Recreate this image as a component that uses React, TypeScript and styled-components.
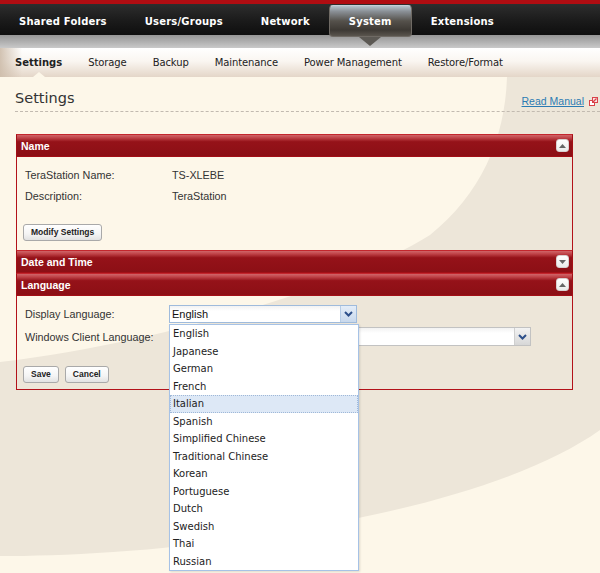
import React from 'react'
import styled, { createGlobalStyle } from 'styled-components'

const GlobalStyle = createGlobalStyle`
  html, body {
    margin: 0;
    padding: 0;
    background: #fdf7e9;
  }
  * { box-sizing: border-box; }
`

const mainTabs = ['Shared Folders', 'Users/Groups', 'Network', 'System', 'Extensions']
const subTabs = ['Settings', 'Storage', 'Backup', 'Maintenance', 'Power Management', 'Restore/Format']
const languages = [
  'English', 'Japanese', 'German', 'French', 'Italian', 'Spanish', 'Simplified Chinese',
  'Traditional Chinese', 'Korean', 'Portuguese', 'Dutch', 'Swedish', 'Thai', 'Russian',
]

const Backdrop = () => (
  <BackdropSvg width="600" height="573" viewBox="0 0 600 573">
    <path
      d="M507 77 L600 77 L600 430 C530 480 400 515 260 535 C160 552 60 556 0 556 L0 362 C180 340 360 280 430 235 C480 195 505 140 507 77 Z"
      fill="#ede6d9"
    />
  </BackdropSvg>
)

const ToggleIcon = ({ up }: { up: boolean }) => (
  <svg width="7" height="4" viewBox="0 0 7 4">
    {up ? <path d="M0 4 L3.5 0 L7 4 Z" fill="#666" /> : <path d="M0 0 L7 0 L3.5 4 Z" fill="#666" />}
  </svg>
)

const Chevron = ({ color }: { color: string }) => (
  <svg width="9" height="6" viewBox="0 0 9 6">
    <path d="M1 1 L4.5 4.5 L8 1" fill="none" stroke={color} strokeWidth="2" />
  </svg>
)

const ExternalIcon = () => (
  <svg width="9" height="9" viewBox="0 0 9 9">
    <rect x="0.5" y="3.5" width="5" height="5" fill="#fff" stroke="#d9434a" />
    <rect x="3.5" y="0.5" width="5" height="5" fill="#fbe3e3" stroke="#d9434a" />
    <path d="M4 5 L7.5 1.5" stroke="#d9434a" strokeWidth="1.2" />
  </svg>
)

type SectionProps = { title: string; open: boolean; children?: React.ReactNode }

const Section = ({ title, open, children }: SectionProps) => (
  <>
    <SectionHeader>
      <span>{title}</span>
      <ToggleButton>
        <ToggleIcon up={open} />
      </ToggleButton>
    </SectionHeader>
    {open && children}
  </>
)

const App = () => {
  return (
    <Page>
      <GlobalStyle />
      <Backdrop />
      <TopBar>
        {mainTabs.map((t) => (
          <MainTab key={t} active={t === 'System'}>{t}</MainTab>
        ))}
      </TopBar>
      <GreyBand />
      <SubNav>
        {subTabs.map((t) => (
          <SubTab key={t} active={t === 'Settings'}>{t}</SubTab>
        ))}
      </SubNav>

      <PageHeader>
        <Title>Settings</Title>
        <ManualLink>
          <span>Read Manual</span>
          <ExternalIcon />
        </ManualLink>
      </PageHeader>

      <Panel>
        <Section title="Name" open>
          <SectionBody bottom={9}>
            <InfoRow>
              <Label>TeraStation Name:</Label>
              <Value>TS-XLEBE</Value>
            </InfoRow>
            <InfoRow>
              <Label>Description:</Label>
              <Value>TeraStation</Value>
            </InfoRow>
            <ButtonRow>
              <SmallButton>Modify Settings</SmallButton>
            </ButtonRow>
          </SectionBody>
        </Section>
        <Section title="Date and Time" open={false} />
        <Section title="Language" open>
          <SectionBody bottom={6}>
            <FieldRow>
              <FieldLabel>Display Language:</FieldLabel>
              <SelectWrap>
                <SelectBox width={188} focused>
                  <SelectText>English</SelectText>
                  <SelectArrow focused>
                    <Chevron color="#2d4f8a" />
                  </SelectArrow>
                </SelectBox>
                <OptionList>
                  {languages.map((l) => (
                    <OptionItem key={l} hovered={l === 'Italian'}>{l}</OptionItem>
                  ))}
                </OptionList>
              </SelectWrap>
            </FieldRow>
            <FieldRow>
              <FieldLabel>Windows Client Language:</FieldLabel>
              <SelectBox width={362}>
                <SelectText />
                <SelectArrow>
                  <Chevron color="#2d4f8a" />
                </SelectArrow>
              </SelectBox>
            </FieldRow>
            <ButtonRow>
              <SmallButton>Save</SmallButton>
              <SmallButton>Cancel</SmallButton>
            </ButtonRow>
          </SectionBody>
        </Section>
      </Panel>
    </Page>
  )
}

export default App

const Page = styled.div`
  position: relative;
  width: 600px;
  min-height: 573px;
  overflow: hidden;
  background: #fdf7e9;
  font-family: "Liberation Sans", Arial, sans-serif;
  color: #333;
`

const BackdropSvg = styled.svg`
  position: absolute;
  top: 0;
  left: 0;
  z-index: 0;
`

const TopBar = styled.div`
  position: relative;
  z-index: 2;
  display: flex;
  height: 35px;
  border-top: 4px solid #b00d12;
  background: linear-gradient(#2e2e2e 0%, #1c1c1c 50%, #0e0e0e 100%);
`

const MainTab = styled.div<{ active?: boolean }>`
  position: relative;
  display: flex;
  align-items: center;
  padding: 3px 19px 0;
  font-family: "DejaVu Sans", Verdana, sans-serif;
  font-weight: bold;
  font-size: 10px;
  letter-spacing: 0.2px;
  color: #fff;
  ${({ active }) =>
    active &&
    `
    margin-top: 1px;
    height: 32px;
    padding-top: 0;
    border: 1px solid #6f6a64;
    border-top-color: #c4d0d8;
    border-radius: 4px;
    background: linear-gradient(#b4c3cc 0%, #8a9096 18%, #55514b 50%, #3d3934 80%, #5a554e 100%);
    &::after {
      content: '';
      position: absolute;
      left: 50%;
      bottom: -10px;
      margin-left: -11px;
      border-left: 11px solid transparent;
      border-right: 11px solid transparent;
      border-top: 9px solid #5c5954;
    }
  `}
`

const GreyBand = styled.div`
  position: relative;
  z-index: 1;
  height: 13px;
  background: linear-gradient(#959595 0%, #b4b4b4 60%, #c9c9c9 100%);
`

const SubNav = styled.div`
  position: relative;
  z-index: 1;
  display: flex;
  height: 29px;
  padding-left: 2px;
  background:
    linear-gradient(to right, rgba(205, 188, 170, 0.9) 0, rgba(255, 255, 255, 0) 22px),
    linear-gradient(#ffffff 0%, #faf6f1 45%, #e4d6c8 100%);
`

const SubTab = styled.div<{ active?: boolean }>`
  position: relative;
  display: flex;
  align-items: center;
  padding: 0 13px;
  font-family: "DejaVu Sans", Verdana, sans-serif;
  font-size: 10px;
  letter-spacing: ${({ active }) => (active ? '0' : '-0.1px')};
  font-weight: ${({ active }) => (active ? 'bold' : 'normal')};
  color: #222;
  ${({ active }) =>
    active &&
    `
    &::after {
      content: '';
      position: absolute;
      left: 50%;
      bottom: 0;
      margin-left: -6px;
      border-left: 6px solid transparent;
      border-right: 6px solid transparent;
      border-bottom: 5px solid #fdf7e9;
    }
  `}
`

const PageHeader = styled.div`
  position: relative;
  z-index: 1;
  display: flex;
  justify-content: space-between;
  align-items: flex-end;
  height: 35px;
  margin-left: 15px;
  border-bottom: 1px dashed #c2bab0;
`

const Title = styled.h1`
  margin: 0 0 4px;
  font-family: "DejaVu Sans", Verdana, sans-serif;
  font-size: 14.5px;
  font-weight: normal;
  line-height: 17px;
  color: #333;
`

const ManualLink = styled.a`
  display: flex;
  align-items: center;
  gap: 5px;
  margin: 0 2px 3px 0;
  font-size: 10.5px;
  line-height: 13px;
  color: #2b7bb3;
  span {
    text-decoration: underline;
  }
`

const Panel = styled.div`
  position: relative;
  z-index: 1;
  width: 557px;
  margin: 22px 0 0 16px;
  border-bottom: 1px solid #b3121a;
`

const SectionHeader = styled.div`
  display: flex;
  justify-content: space-between;
  align-items: center;
  height: 23px;
  padding: 0 3px 0 4px;
  border: 1px solid #a30f16;
  border-top-color: #c3262d;
  background: linear-gradient(#d06569 0%, #bf4247 14%, #951219 32%, #8c0f15 100%);
  font-weight: bold;
  font-size: 10.5px;
  color: #fff;
`

const ToggleButton = styled.div`
  display: flex;
  align-items: center;
  justify-content: center;
  width: 13px;
  height: 13px;
  border-radius: 3px;
  border: 1px solid #d8d0d0;
  background: linear-gradient(#ffffff, #ebebeb);
`

const SectionBody = styled.div<{ bottom: number }>`
  display: flex;
  flex-direction: column;
  padding: 7px 6px ${({ bottom }) => bottom}px;
  border-left: 1px solid #b3121a;
  border-right: 1px solid #b3121a;
`

const InfoRow = styled.div`
  display: flex;
  align-items: center;
  height: 21px;
  padding-left: 2px;
  font-size: 10.8px;
`

const Label = styled.div`
  width: 147px;
`

const Value = styled.div``

const FieldRow = styled.div`
  display: flex;
  align-items: center;
  padding-left: 2px;
  margin: 2px 0;
  font-size: 10.8px;
`

const FieldLabel = styled.div`
  width: 144px;
`

const ButtonRow = styled.div`
  display: flex;
  gap: 6px;
  margin-top: 18px;
`

const SmallButton = styled.button`
  height: 17px;
  padding: 0 7px;
  border: 1px solid #a9a9a9;
  border-radius: 3px;
  background: linear-gradient(#ffffff 0%, #f4f4f4 60%, #e2e2e2 100%);
  font-family: "Liberation Sans", Arial, sans-serif;
  font-weight: bold;
  font-size: 8.5px;
  color: #222;
  line-height: 15px;
`

const SelectWrap = styled.div`
  position: relative;
`

const SelectBox = styled.div<{ width: number; focused?: boolean }>`
  display: flex;
  width: ${({ width }) => width}px;
  height: ${({ focused }) => (focused ? 18 : 19)}px;
  border: 1px solid ${({ focused }) => (focused ? '#9fbbdc' : '#c2c2c2')};
  background: linear-gradient(#f2f2f2 0, #ffffff 5px);
`

const SelectText = styled.div`
  flex: 1;
  padding-left: 2px;
  font-size: 11px;
  line-height: 16px;
  color: #111;
`

const SelectArrow = styled.div<{ focused?: boolean }>`
  display: flex;
  align-items: center;
  justify-content: center;
  width: 16px;
  border-left: 1px solid ${({ focused }) => (focused ? '#b6cce6' : '#cfcfcf')};
  background: ${({ focused }) =>
    focused ? 'linear-gradient(#e4edf8, #c8d8ec)' : 'linear-gradient(#f3f3f3, #d7d7d7)'};
`

const OptionList = styled.div`
  position: absolute;
  top: 19px;
  left: 0;
  z-index: 5;
  width: 190px;
  border: 1px solid #a6c2e6;
  background: #fff;
  box-shadow: 1px 1px 2px rgba(0, 0, 0, 0.12);
`

const OptionItem = styled.div<{ hovered?: boolean }>`
  height: 17.5px;
  padding-left: 2px;
  font-family: "DejaVu Sans", Verdana, sans-serif;
  font-size: 10px;
  line-height: 16.5px;
  color: #222;
  border: 1px dotted ${({ hovered }) => (hovered ? '#9fb8d8' : 'transparent')};
  background: ${({ hovered }) => (hovered ? '#dde8f6' : 'transparent')};
`
